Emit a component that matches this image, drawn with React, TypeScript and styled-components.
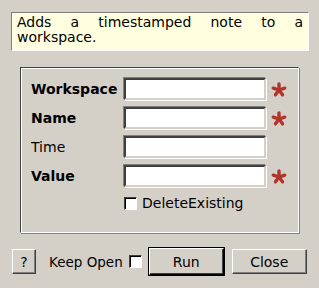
import React from "react";
import styled, { createGlobalStyle } from "styled-components";

const Global = createGlobalStyle`
  html, body { margin: 0; padding: 0; background: #d4d0c8; }
  body { font-family: "DejaVu Sans", "Liberation Sans", sans-serif; font-size: 14px; color: #000; }
`;

const Dialog = styled.div`
  width: 319px;
  height: 288px;
  box-sizing: border-box;
  padding-top: 12px;
  display: flex;
  flex-direction: column;
  background: #d4d0c8;
`;

const Description = styled.div`
  margin-left: 11px;
  width: 298px;
  height: 39px;
  box-sizing: border-box;
  background: #ffffe0;
  border-top: 1px solid #808080;
  border-left: 1px solid #808080;
  border-right: 1px solid #ffffff;
  border-bottom: 1px solid #ffffff;
  padding: 2px 5px 0 5px;
  line-height: 15px;
  text-align: justify;
`;

const GroupBox = styled.div`
  margin-top: 16px;
  margin-left: 20px;
  width: 279px;
  height: 166px;
  box-sizing: border-box;
  border-top: 1px solid #404040;
  border-left: 1px solid #404040;
  border-right: 1px solid #ffffff;
  border-bottom: 1px solid #ffffff;
  box-shadow: inset 1px 1px 0 #ffffff, 1px 1px 0 #808080;
  padding: 10px 0 0 10px;
  display: grid;
  grid-template-columns: 93px 142px 22px;
  grid-auto-rows: 22px;
  row-gap: 7px;
  align-items: center;
`;

const Label = styled.div<{ $bold?: boolean }>`
  font-weight: ${(p) => (p.$bold ? "bold" : "normal")};
  white-space: nowrap;
`;

const Field = styled.input`
  width: 142px;
  height: 22px;
  box-sizing: border-box;
  margin: 0;
  padding: 0 3px;
  background: #ffffff;
  border-style: solid;
  border-width: 2px;
  border-color: #404040 #d4d0c8 #d4d0c8 #404040;
  box-shadow: -1px -1px 0 #808080, 1px 1px 0 #ffffff;
  outline: none;
  font: inherit;
`;

const Required = styled.div`
  display: flex;
  justify-content: flex-end;
  align-items: center;
  padding-top: 1px;
`;

const CheckRow = styled.label`
  grid-column: 2 / span 2;
  display: flex;
  align-items: center;
  gap: 5px;
  margin-top: -4px;
`;

const Box = styled.span`
  display: inline-block;
  width: 13px;
  height: 13px;
  box-sizing: border-box;
  background: #ffffff;
  border-style: solid;
  border-width: 1px;
  border-color: #404040 #ffffff #ffffff #404040;
  box-shadow: inset 1px 1px 0 #000000;
`;

const Footer = styled.div`
  margin-top: 15px;
  margin-left: 12px;
  display: flex;
  align-items: center;
`;

const Button = styled.button<{ $w: number; $default?: boolean }>`
  width: ${(p) => p.$w}px;
  height: ${(p) => (p.$default ? 27 : 25)}px;
  box-sizing: border-box;
  margin: 0;
  padding: 0;
  background: #d4d0c8;
  font: inherit;
  color: #000;
  border-style: solid;
  border-width: 1px;
  border-color: #ffffff #404040 #404040 #ffffff;
  box-shadow: inset -1px -1px 0 #808080;
  ${(p) =>
    p.$default
      ? `outline: 1px solid #000; outline-offset: 0; border-color: #ffffff #000 #000 #ffffff; box-shadow: inset -1px -1px 0 #404040;`
      : ""}
`;

const KeepOpen = styled.label`
  display: flex;
  align-items: center;
  gap: 6px;
  margin-left: 13px;
  margin-right: 7px;
  font-size: 13.5px;
`;

const Spacer = styled.span`
  width: 8px;
`;

const Star = () => (
  <svg width="18" height="18" viewBox="-9 -9 18 18">
    {[0, 72, 144, 216, 288].map((a) => {
      const r = (a - 90) * (Math.PI / 180);
      return (
        <line
          key={a}
          x1={0}
          y1={0}
          x2={Math.cos(r) * 6}
          y2={Math.sin(r) * 6}
          stroke="#b3342a"
          strokeWidth={3.4}
          strokeLinecap="round"
        />
      );
    })}
  </svg>
);

const rows: { label: string; bold: boolean; req: boolean }[] = [
  { label: "Workspace", bold: true, req: true },
  { label: "Name", bold: true, req: true },
  { label: "Time", bold: false, req: false },
  { label: "Value", bold: true, req: true },
];

export default function App() {
  return (
    <>
      <Global />
      <Dialog>
        <Description>Adds a timestamped note to a workspace.</Description>
        <GroupBox>
          {rows.map((r) => (
            <React.Fragment key={r.label}>
              <Label $bold={r.bold}>{r.label}</Label>
              <Field />
              <Required>{r.req ? <Star /> : null}</Required>
            </React.Fragment>
          ))}
          <span />
          <CheckRow>
            <Box />
            DeleteExisting
          </CheckRow>
        </GroupBox>
        <Footer>
          <Button $w={24}>?</Button>
          <KeepOpen>
            Keep Open
            <Box />
          </KeepOpen>
          <Button $w={75} $default>
            Run
          </Button>
          <Spacer />
          <Button $w={75}>Close</Button>
        </Footer>
      </Dialog>
    </>
  );
}
